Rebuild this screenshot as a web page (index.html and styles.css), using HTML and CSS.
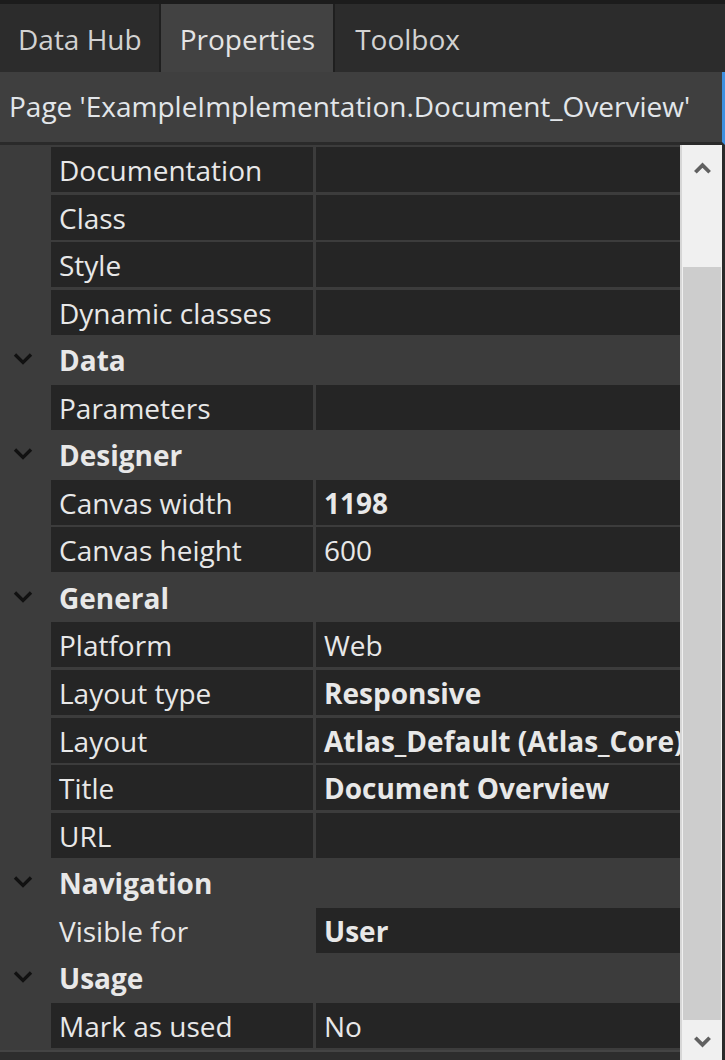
FILE: index.html
```html
<!DOCTYPE html>
<html>
<head>
<meta charset="utf-8">
<link rel="stylesheet" href="styles.css">
</head>
<body>
<div class="panel">
  <div class="tabs">
    <div class="tab">Data Hub</div>
    <div class="tab active">Properties</div>
    <div class="tab rest">Toolbox</div>
  </div>
  <div class="header">Page 'ExampleImplementation.Document_Overview'</div>
  <div class="body">
    <div class="gridwrap">
      <div class="grid">
        <div class="row"><div class="name">Documentation</div><div class="value"></div></div>
        <div class="row"><div class="name">Class</div><div class="value"></div></div>
        <div class="row"><div class="name">Style</div><div class="value"></div></div>
        <div class="row"><div class="name">Dynamic classes</div><div class="value"></div></div>
        <div class="cat"><svg class="chev" viewBox="0 0 20 12"><polyline points="2,1.5 10,9.5 18,1.5"/></svg><span>Data</span></div>
        <div class="row"><div class="name">Parameters</div><div class="value"></div></div>
        <div class="cat"><svg class="chev" viewBox="0 0 20 12"><polyline points="2,1.5 10,9.5 18,1.5"/></svg><span>Designer</span></div>
        <div class="row"><div class="name">Canvas width</div><div class="value bold">1198</div></div>
        <div class="row"><div class="name">Canvas height</div><div class="value">600</div></div>
        <div class="cat"><svg class="chev" viewBox="0 0 20 12"><polyline points="2,1.5 10,9.5 18,1.5"/></svg><span>General</span></div>
        <div class="row"><div class="name">Platform</div><div class="value">Web</div></div>
        <div class="row"><div class="name">Layout type</div><div class="value bold">Responsive</div></div>
        <div class="row"><div class="name">Layout</div><div class="value bold">Atlas_Default (Atlas_Core)</div></div>
        <div class="row"><div class="name">Title</div><div class="value bold">Document Overview</div></div>
        <div class="row"><div class="name">URL</div><div class="value"></div></div>
        <div class="cat"><svg class="chev" viewBox="0 0 20 12"><polyline points="2,1.5 10,9.5 18,1.5"/></svg><span>Navigation</span></div>
        <div class="row"><div class="name light">Visible for</div><div class="value bold">User</div></div>
        <div class="cat"><svg class="chev" viewBox="0 0 20 12"><polyline points="2,1.5 10,9.5 18,1.5"/></svg><span>Usage</span></div>
        <div class="row"><div class="name">Mark as used</div><div class="value">No</div></div>
      </div>
    </div>
    <div class="scrollbar">
      <div class="sbtn up"><svg viewBox="0 0 20 14"><polyline points="2.5,11.5 10,4 17.5,11.5"/></svg></div>
      <div class="track"><div class="thumb"></div></div>
      <div class="sbtn down"><svg viewBox="0 0 20 14"><polyline points="2.5,2.5 10,10 17.5,2.5"/></svg></div>
    </div>
    <div class="edge"></div>
  </div>
</div>
</body>
</html>
```

FILE: styles.css
```css
html, body {
  margin: 0;
  padding: 0;
  background: #2d2d2d;
}
body {
  width: 725px;
  height: 1060px;
  overflow: hidden;
  font-family: "Open Sans", "Noto Sans", sans-serif;
  font-size: 28px;
  color: #e8e8e8;
}
.panel {
  display: flex;
  flex-direction: column;
  width: 725px;
  height: 1060px;
  background: #2d2d2d;
}
.tabs {
  display: flex;
  height: 72px;
  box-sizing: border-box;
  border-top: 4px solid #1c1c1c;
  background: #1f1f1f;
  gap: 2px;
  flex: none;
}
.tab {
  padding: 2px 17px 0 18px;
  background: #2c2c2c;
  color: #d2d2d2;
  line-height: 66px;
  white-space: nowrap;
}
.tab.active {
  background: #424242;
  color: #e4e4e4;
  padding: 2px 18px 0 19px;
}
.tab.rest {
  flex: 1;
  padding-left: 20px;
}
.header {
  height: 73px;
  flex: none;
  box-sizing: border-box;
  background: #3f3f3f;
  border-right: 3px solid #3d8fe0;
  border-bottom: 3px solid #2a2a2a;
  padding: 0 0 0 9px;
  line-height: 68px;
  color: #e2e6ea;
  white-space: nowrap;
  overflow: hidden;
}
.body {
  display: flex;
  height: 915px;
  flex: none;
}
.gridwrap {
  width: 680px;
  background: #2d2d2d;
}
.grid {
  background: #3c3c3c;
  padding-top: 2px;
  border-bottom: 2px solid #444444;
}
.row {
  display: flex;
  height: 47.56px;
  padding-left: 51px;
  padding-bottom: 2.56px;
  box-sizing: border-box;
  gap: 3px;
}
.name, .value {
  background: #252525;
  line-height: 43px;
  padding: 2px 0 0 8px;
  box-sizing: border-box;
  white-space: nowrap;
  overflow: hidden;
}
.name {
  width: 262px;
  flex: none;
}
.name.light {
  background: transparent;
}
.value {
  flex: 1;
}
.bold, .cat span {
  font-weight: 700;
}
.cat {
  display: flex;
  height: 47.56px;
  box-sizing: border-box;
}
.cat span {
  padding: 2px 0 0 26px;
  line-height: 43px;
}
.chev {
  width: 20px;
  height: 12px;
  margin: 16px 0 0 13px;
  fill: none;
  stroke: #111111;
  stroke-width: 3.3;
}
.scrollbar {
  width: 42px;
  box-sizing: border-box;
  background: #f0f0f0;
  border-left: 2px solid #d6d6d6;
  display: flex;
  flex-direction: column;
}
.sbtn {
  display: flex;
  justify-content: center;
  flex: none;
}
.sbtn.up {
  height: 47px;
  padding-top: 16px;
  box-sizing: border-box;
}
.sbtn.down {
  height: 40px;
  padding-top: 15px;
  box-sizing: border-box;
}
.sbtn svg {
  width: 19px;
  height: 14px;
  fill: none;
  stroke: #606060;
  stroke-width: 4;
}
.track {
  flex: 1;
  padding: 75px 1px 0 1px;
}
.thumb {
  height: 100%;
  background: #cdcdcd;
}
.edge {
  width: 3px;
  background: #2a2a2a;
}
```
